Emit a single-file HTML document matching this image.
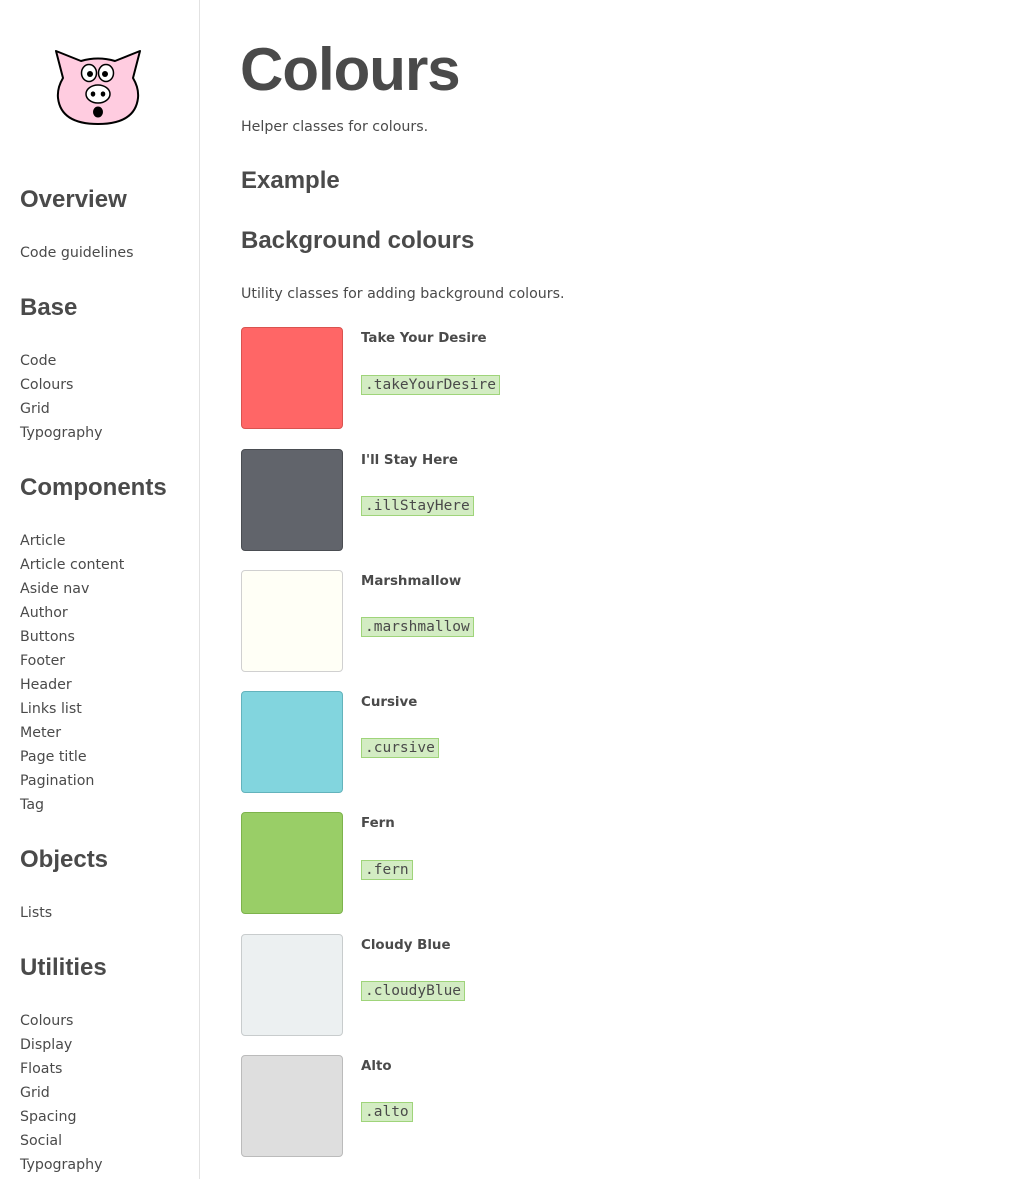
<!DOCTYPE html>
<html><head><meta charset="utf-8"><style>
*{margin:0;padding:0;box-sizing:border-box}
body{width:1024px;height:1179px;background:#fff;font-family:"DejaVu Sans","Liberation Sans",sans-serif;color:#4a4a4a;position:relative;overflow:hidden}
.side{position:absolute;left:0;top:0;width:200px;height:1179px;border-right:1px solid #e2e2e2}
.a{position:absolute;white-space:nowrap}
.n{font-size:14.2px;line-height:24px;left:20px;color:#4a4a4a}
.h{font-family:"Liberation Sans",sans-serif;font-size:24px;line-height:30px;font-weight:bold;left:20px;color:#4a4a4a}
.sw{position:absolute;left:241px;width:102px;height:102px;border-radius:4px;border:1px solid}
.t{position:absolute;left:361px;font-size:13.4px;font-weight:bold;line-height:24px}
.c{position:absolute;left:361px;height:20px;line-height:18px;font-family:"DejaVu Sans Mono","Liberation Mono",monospace;font-size:14.5px;background:#d3ecc3;border:1px solid #9fd47a;padding:0 3px;color:#4a4a4a}
</style></head><body>
<div class="side">
<svg class="a" style="left:53px;top:48px" width="90" height="80" viewBox="0 0 90 80">
<path d="M3 3 L28 13 Q45 8 62 13 L87 3 L80 30 Q86 40 85 50 Q82 76 45 76 Q8 76 5 50 Q4 40 10 30 Z" fill="#ffcce0" stroke="#000" stroke-width="2" stroke-linejoin="round"/>
<ellipse cx="36" cy="25" rx="7.5" ry="8.5" fill="#fff" stroke="#000" stroke-width="1.5"/>
<ellipse cx="53" cy="25" rx="7.5" ry="8.5" fill="#fff" stroke="#000" stroke-width="1.5"/>
<circle cx="37" cy="26" r="3" fill="#000"/><circle cx="52" cy="26" r="3" fill="#000"/>
<ellipse cx="45" cy="46" rx="12" ry="9" fill="#fff" stroke="#000" stroke-width="1.5"/>
<ellipse cx="40" cy="46" rx="2.3" ry="2.6" fill="#000"/><ellipse cx="50" cy="46" rx="2.3" ry="2.6" fill="#000"/>
<ellipse cx="45" cy="64" rx="5" ry="5.5" fill="#000"/>
</svg>
</div>
<div class="a h" style="top:185px">Overview</div>
<div class="a n" style="top:241px">Code guidelines</div>
<div class="a h" style="top:293px">Base</div>
<div class="a n" style="top:349px">Code</div>
<div class="a n" style="top:373px">Colours</div>
<div class="a n" style="top:397px">Grid</div>
<div class="a n" style="top:421px">Typography</div>
<div class="a h" style="top:473px">Components</div>
<div class="a n" style="top:529px">Article</div>
<div class="a n" style="top:553px">Article content</div>
<div class="a n" style="top:577px">Aside nav</div>
<div class="a n" style="top:601px">Author</div>
<div class="a n" style="top:625px">Buttons</div>
<div class="a n" style="top:649px">Footer</div>
<div class="a n" style="top:673px">Header</div>
<div class="a n" style="top:697px">Links list</div>
<div class="a n" style="top:721px">Meter</div>
<div class="a n" style="top:745px">Page title</div>
<div class="a n" style="top:769px">Pagination</div>
<div class="a n" style="top:793px">Tag</div>
<div class="a h" style="top:845px">Objects</div>
<div class="a n" style="top:901px">Lists</div>
<div class="a h" style="top:953px">Utilities</div>
<div class="a n" style="top:1009px">Colours</div>
<div class="a n" style="top:1033px">Display</div>
<div class="a n" style="top:1057px">Floats</div>
<div class="a n" style="top:1081px">Grid</div>
<div class="a n" style="top:1105px">Spacing</div>
<div class="a n" style="top:1129px">Social</div>
<div class="a n" style="top:1153px">Typography</div>

<div class="a" style="left:240px;top:34px;font-family:'Liberation Sans',sans-serif;font-size:60px;line-height:72px;font-weight:bold;letter-spacing:-1px">Colours</div>
<div class="a" style="left:241px;top:115px;font-size:14.2px;line-height:24px">Helper classes for colours.</div>
<div class="a h" style="left:241px;top:166px">Example</div>
<div class="a h" style="left:241px;top:226px">Background colours</div>
<div class="a" style="left:241px;top:282px;font-size:14.2px;line-height:24px">Utility classes for adding background colours.</div>

<div class="sw" style="top:327px;background:#ff6666;border-color:#d9534f"></div>
<div class="t" style="top:327px">Take Your Desire</div>
<div class="c" style="top:375px">.takeYourDesire</div>

<div class="sw" style="top:449px;background:#61646b;border-color:#4a4d52"></div>
<div class="t" style="top:449px">I'll Stay Here</div>
<div class="c" style="top:496px">.illStayHere</div>

<div class="sw" style="top:570px;background:#fffff6;border-color:#d0d0d0"></div>
<div class="t" style="top:570px">Marshmallow</div>
<div class="c" style="top:617px">.marshmallow</div>

<div class="sw" style="top:691px;background:#82d5de;border-color:#63b3bc"></div>
<div class="t" style="top:691px">Cursive</div>
<div class="c" style="top:738px">.cursive</div>

<div class="sw" style="top:812px;background:#99ce67;border-color:#7db34c"></div>
<div class="t" style="top:812px">Fern</div>
<div class="c" style="top:860px">.fern</div>

<div class="sw" style="top:934px;background:#ecf0f1;border-color:#c8cccd"></div>
<div class="t" style="top:934px">Cloudy Blue</div>
<div class="c" style="top:981px">.cloudyBlue</div>

<div class="sw" style="top:1055px;background:#dedede;border-color:#bbbbbb"></div>
<div class="t" style="top:1055px">Alto</div>
<div class="c" style="top:1102px">.alto</div>
</body></html>
